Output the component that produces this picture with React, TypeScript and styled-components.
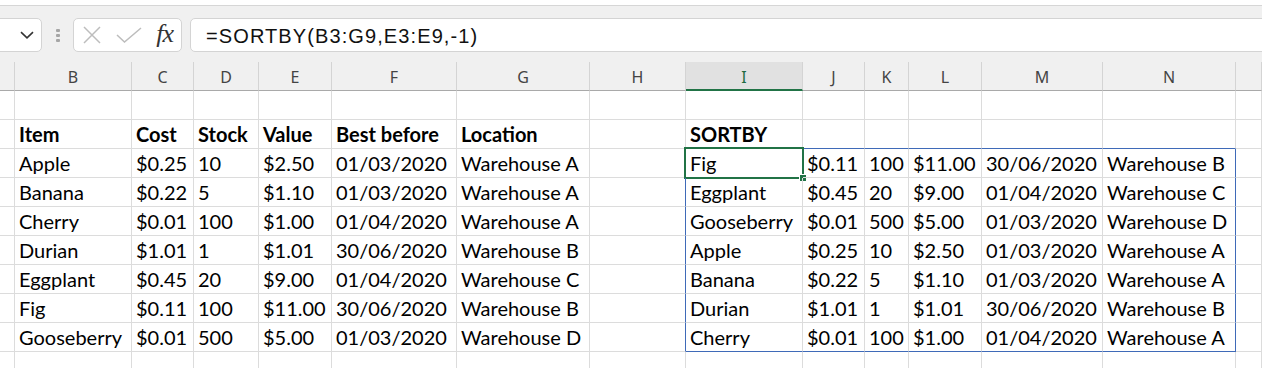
import React from "react";
import styled, { createGlobalStyle } from "styled-components";

const GlobalStyle = createGlobalStyle`
    html, body {
        margin: 0;
        padding: 0;
        background: #ffffff;
    }
    body {
        width: 1262px;
        height: 368px;
        overflow: hidden;
    }
`;

const GRID = "#dcdcdc";
const BLUE = "#3f6ab8";
const GREEN = "#217346";

const COLUMNS = [
    { id: "", w: 15 },
    { id: "B", w: 117 },
    { id: "C", w: 62 },
    { id: "D", w: 65 },
    { id: "E", w: 73 },
    { id: "F", w: 125 },
    { id: "G", w: 133 },
    { id: "H", w: 96 },
    { id: "I", w: 117 },
    { id: "J", w: 62 },
    { id: "K", w: 44 },
    { id: "L", w: 73 },
    { id: "M", w: 121 },
    { id: "N", w: 133 },
    { id: "", w: 0 },
];

const template = COLUMNS.map((c) => (c.w ? `${c.w}px` : "1fr")).join(" ");

const source = [
    ["Apple", "$0.25", "10", "$2.50", "01/03/2020", "Warehouse A"],
    ["Banana", "$0.22", "5", "$1.10", "01/03/2020", "Warehouse A"],
    ["Cherry", "$0.01", "100", "$1.00", "01/04/2020", "Warehouse A"],
    ["Durian", "$1.01", "1", "$1.01", "30/06/2020", "Warehouse B"],
    ["Eggplant", "$0.45", "20", "$9.00", "01/04/2020", "Warehouse C"],
    ["Fig", "$0.11", "100", "$11.00", "30/06/2020", "Warehouse B"],
    ["Gooseberry", "$0.01", "500", "$5.00", "01/03/2020", "Warehouse D"],
];

// SORTBY(B3:G9, E3:E9, -1)
const sorted = [...source].sort(
    (a, b) => parseFloat(b[3].slice(1)) - parseFloat(a[3].slice(1))
);

const headings = ["Item", "Cost", "Stock", "Value", "Best before", "Location"];

const Page = styled.div`
    width: 1262px;
    display: flex;
    flex-direction: column;
    overflow: hidden;
`;

const TopStrip = styled.div`
    height: 5px;
    background: #ffffff;
    border-bottom: 1px solid #d6d6d6;
`;

const FormulaBar = styled.div`
    display: flex;
    align-items: center;
    background: #f0f0f0;
    padding: 12px 0 10px;
`;

const Box = styled.div<{ $width?: number }>`
    box-sizing: border-box;
    height: 34px;
    background: #ffffff;
    border: 1px solid #d4d4d4;
    border-radius: 5px;
    display: flex;
    align-items: center;
    flex: ${({ $width }) => ($width ? `0 0 ${$width}px` : "1 1 auto")};
`;

const NameBox = styled(Box)`
    margin-left: -21px;
    justify-content: flex-end;
    padding-right: 7px;
`;

const Grip = styled.div`
    flex: 0 0 31px;
    display: flex;
    flex-direction: column;
    align-items: center;
    gap: 2px;
    padding-top: 1px;
`;

const GripDot = styled.span`
    width: 4px;
    height: 3px;
    border-radius: 1px;
    background: #a6a6a6;
`;

const FuncBox = styled(Box)`
    justify-content: space-between;
    padding: 0 6px 0 8px;
`;

const Fx = styled.span`
    font-family: "Liberation Serif", serif;
    font-style: italic;
    font-size: 26px;
    color: #333333;
    letter-spacing: -1px;
    padding-right: 2px;
    margin-top: -2px;
`;

const FormulaBox = styled(Box)`
    margin-left: 8px;
    margin-right: -12px;
    padding: 2px 0 0 15px;
    font-family: "Liberation Sans", Arial, sans-serif;
    font-size: 20px;
    letter-spacing: 1.1px;
    color: #111111;
`;

const HeaderRow = styled.div`
    display: grid;
    grid-template-columns: ${template};
    background: #f0f0f0;
`;

const ColHead = styled.div<{ $active?: boolean }>`
    box-sizing: border-box;
    height: 29px;
    display: flex;
    align-items: center;
    justify-content: center;
    padding-top: 2px;
    font-family: "Noto Sans", "Open Sans", sans-serif;
    font-size: 16px;
    color: ${({ $active }) => ($active ? "#1e6b41" : "#444444")};
    background: ${({ $active }) => ($active ? "#e1e1e1" : "transparent")};
    border-right: 1px solid #d4d4d4;
    border-bottom: ${({ $active }) =>
        $active ? `2px solid ${GREEN}` : "1px solid #a9a9a9"};
`;

const Row = styled.div`
    display: grid;
    grid-template-columns: ${template};
`;

const Cell = styled.div<{
    $bold?: boolean;
    $right?: string;
    $bottom?: string;
}>`
    position: relative;
    box-sizing: border-box;
    height: 29px;
    padding: 0 4px;
    line-height: 28px;
    white-space: nowrap;
    font-family: "Lato", "Noto Sans", sans-serif;
    font-size: 20px;
    font-weight: ${({ $bold }) => ($bold ? 700 : 400)};
    color: #000000;
    border-right: 1px solid ${({ $right }) => $right || GRID};
    border-bottom: 1px solid ${({ $bottom }) => $bottom || GRID};
`;

const Selection = styled.div`
    position: absolute;
    left: -2px;
    top: -2px;
    right: -2px;
    bottom: -2px;
    border: 2px solid ${GREEN};
    pointer-events: none;
`;

const FillHandle = styled.div`
    position: absolute;
    right: -5px;
    bottom: -5px;
    width: 6px;
    height: 6px;
    background: ${GREEN};
    border: 1px solid #ffffff;
`;

const Chevron = () => (
    <svg width="14" height="8" viewBox="0 0 14 8">
        <path d="M1 1.2 L7 6.8 L13 1.2" fill="none" stroke="#333" strokeWidth="1.6" />
    </svg>
);

const Cross = () => (
    <svg width="20" height="18" viewBox="0 0 20 18">
        <path d="M2 1 L18 17 M18 1 L2 17" stroke="#bdbdbd" strokeWidth="1.5" fill="none" />
    </svg>
);

const Check = () => (
    <svg width="26" height="16" viewBox="0 0 26 16">
        <path d="M1 8 L8.5 15 L25 1" stroke="#bdbdbd" strokeWidth="1.5" fill="none" />
    </svg>
);

type CellData = { text?: string; bold?: boolean };

// build the sheet rows: row 1 empty, row 2 headings, rows 3-9 data, row 10 empty
const buildRows = (): CellData[][] => {
    const rows: CellData[][] = [];
    const blank = () => COLUMNS.map(() => ({} as CellData));
    rows.push(blank());
    const head = blank();
    headings.forEach((h, i) => (head[1 + i] = { text: h, bold: true }));
    head[8] = { text: "SORTBY", bold: true };
    rows.push(head);
    for (let r = 0; r < 7; r++) {
        const row = blank();
        source[r].forEach((v, i) => (row[1 + i] = { text: v }));
        sorted[r].forEach((v, i) => (row[8 + i] = { text: v }));
        rows.push(row);
    }
    rows.push(blank());
    return rows;
};

const rows = buildRows();

const edgeRight = (r: number, c: number) => {
    if (r >= 2 && r <= 8 && (c === 7 || c === 13)) return BLUE;
    return undefined;
};

const edgeBottom = (r: number, c: number) => {
    if ((r === 1 || r === 8) && c >= 8 && c <= 13) return BLUE;
    return undefined;
};

const App: React.FC = () => {
    return (
        <>
            <GlobalStyle />
            <Page>
                <TopStrip />
                <FormulaBar>
                    <NameBox $width={63}>
                        <Chevron />
                    </NameBox>
                    <Grip>
                        <GripDot />
                        <GripDot />
                        <GripDot />
                    </Grip>
                    <FuncBox $width={109}>
                        <Cross />
                        <Check />
                        <Fx>fx</Fx>
                    </FuncBox>
                    <FormulaBox>=SORTBY(B3:G9,E3:E9,-1)</FormulaBox>
                </FormulaBar>

                <HeaderRow>
                    {COLUMNS.map((col, i) => (
                        <ColHead key={i} $active={col.id === "I"}>
                            {col.id}
                        </ColHead>
                    ))}
                </HeaderRow>

                {rows.map((row, r) => (
                    <Row key={r}>
                        {row.map((cell, c) => (
                            <Cell
                                key={c}
                                $bold={cell.bold}
                                $right={edgeRight(r, c)}
                                $bottom={edgeBottom(r, c)}
                            >
                                {cell.text}
                                {r === 2 && c === 8 && (
                                    <Selection>
                                        <FillHandle />
                                    </Selection>
                                )}
                            </Cell>
                        ))}
                    </Row>
                ))}
            </Page>
        </>
    );
};

export default App;
